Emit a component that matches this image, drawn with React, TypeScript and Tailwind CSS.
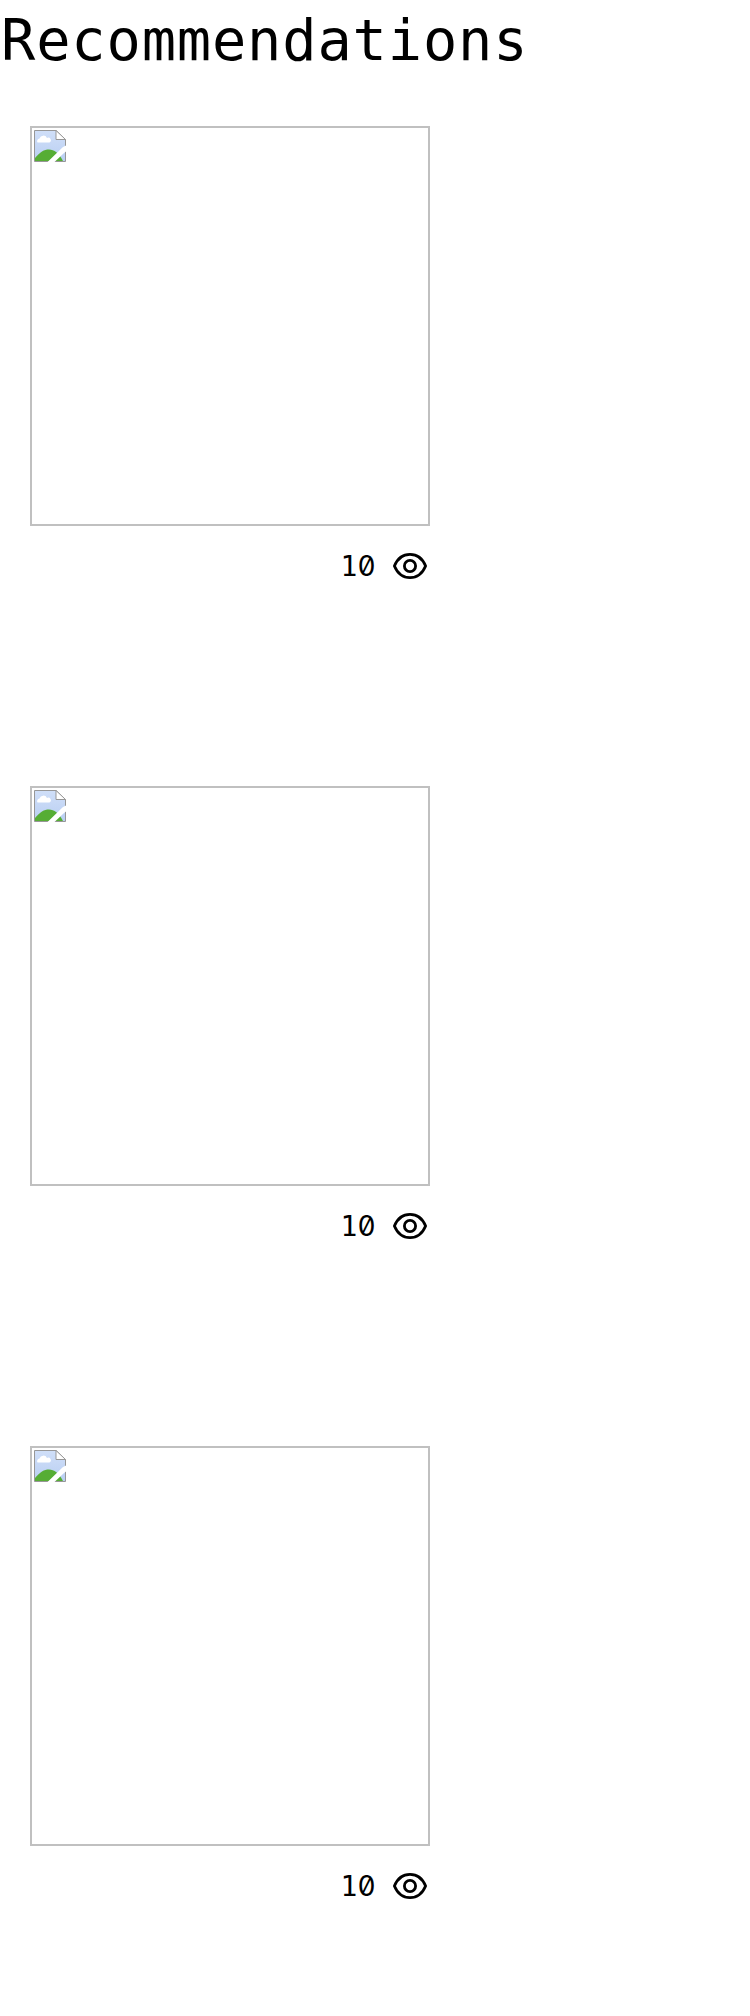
import React from "react";

function BrokenImage() {
  return (
    <div className="h-[400px] w-[400px] border-2 border-[#c0c0c0] p-0.5">
      <svg width="32" height="32" viewBox="0 0 32 32" className="block">
        <defs>
          <linearGradient id="sky" x1="0" y1="0" x2="0" y2="1">
            <stop offset="0" stopColor="#d0dff8" />
            <stop offset="1" stopColor="#b9cff3" />
          </linearGradient>
        </defs>
        <path d="M0.500 0.500H22L31.500 9.500V31.500H0.500Z" fill="url(#sky)" stroke="#979797" />
        <path d="M3.500 12.500a2.600 2.600 0 0 1 2-4a4 4 0 0 1 7.500-.5a2.500 2.500 0 0 1 2.500 4.500Z" fill="#fff" />
        <path d="M1 31V28C6 22 10 19.500 15 19.500C20 19.500 25 23 29 31Z" fill="#56ad35" />
        <path d="M22 0.500V9.500H31.500Z" fill="#fff" stroke="#979797" />
        <path d="M13.500 32L29 17L32 15.500V21.500L30 23L20.500 32Z" fill="#fff" />
      </svg>
    </div>
  );
}

function Card({ views }: { views: number }) {
  return (
    <article className="h-[660px] w-[400px]">
      <BrokenImage />
      <div className="flex h-20 items-center justify-end gap-[17px] pr-[3px]">
        <span className="font-['DejaVu_Sans_Mono',monospace] text-[28px] leading-8 tracking-[0.5px]">
          {String(views).split("").map((digit, i) =>
            digit === "0" ? (
              <span key={i} className="font-['Inter',sans-serif] slashed-zero">{digit}</span>
            ) : (
              <span key={i}>{digit}</span>
            )
          )}
        </span>
        <svg width="34" height="26" viewBox="0 0 34 26" fill="none" stroke="#000" strokeWidth="2.8">
          <path d="M1.400 13C4.500 5.500 10 1.400 17 1.400S29.500 5.500 32.600 13C29.500 20.500 24 24.600 17 24.600S4.500 20.500 1.400 13Z" strokeLinejoin="round" />
          <circle cx="17" cy="13" r="5.600" />
        </svg>
      </div>
    </article>
  );
}

export default function App() {
  return (
    <main className="h-[2016px] w-full overflow-hidden bg-white text-black">
      <h1 className="h-[126px] pl-px font-['DejaVu_Sans_Mono',monospace] text-[57px] leading-[80px] tracking-[0.84px]">Recommendations</h1>
      <div className="flex flex-col pl-[30px]">
        <Card views={10} />
        <Card views={10} />
        <Card views={10} />
      </div>
    </main>
  );
}
